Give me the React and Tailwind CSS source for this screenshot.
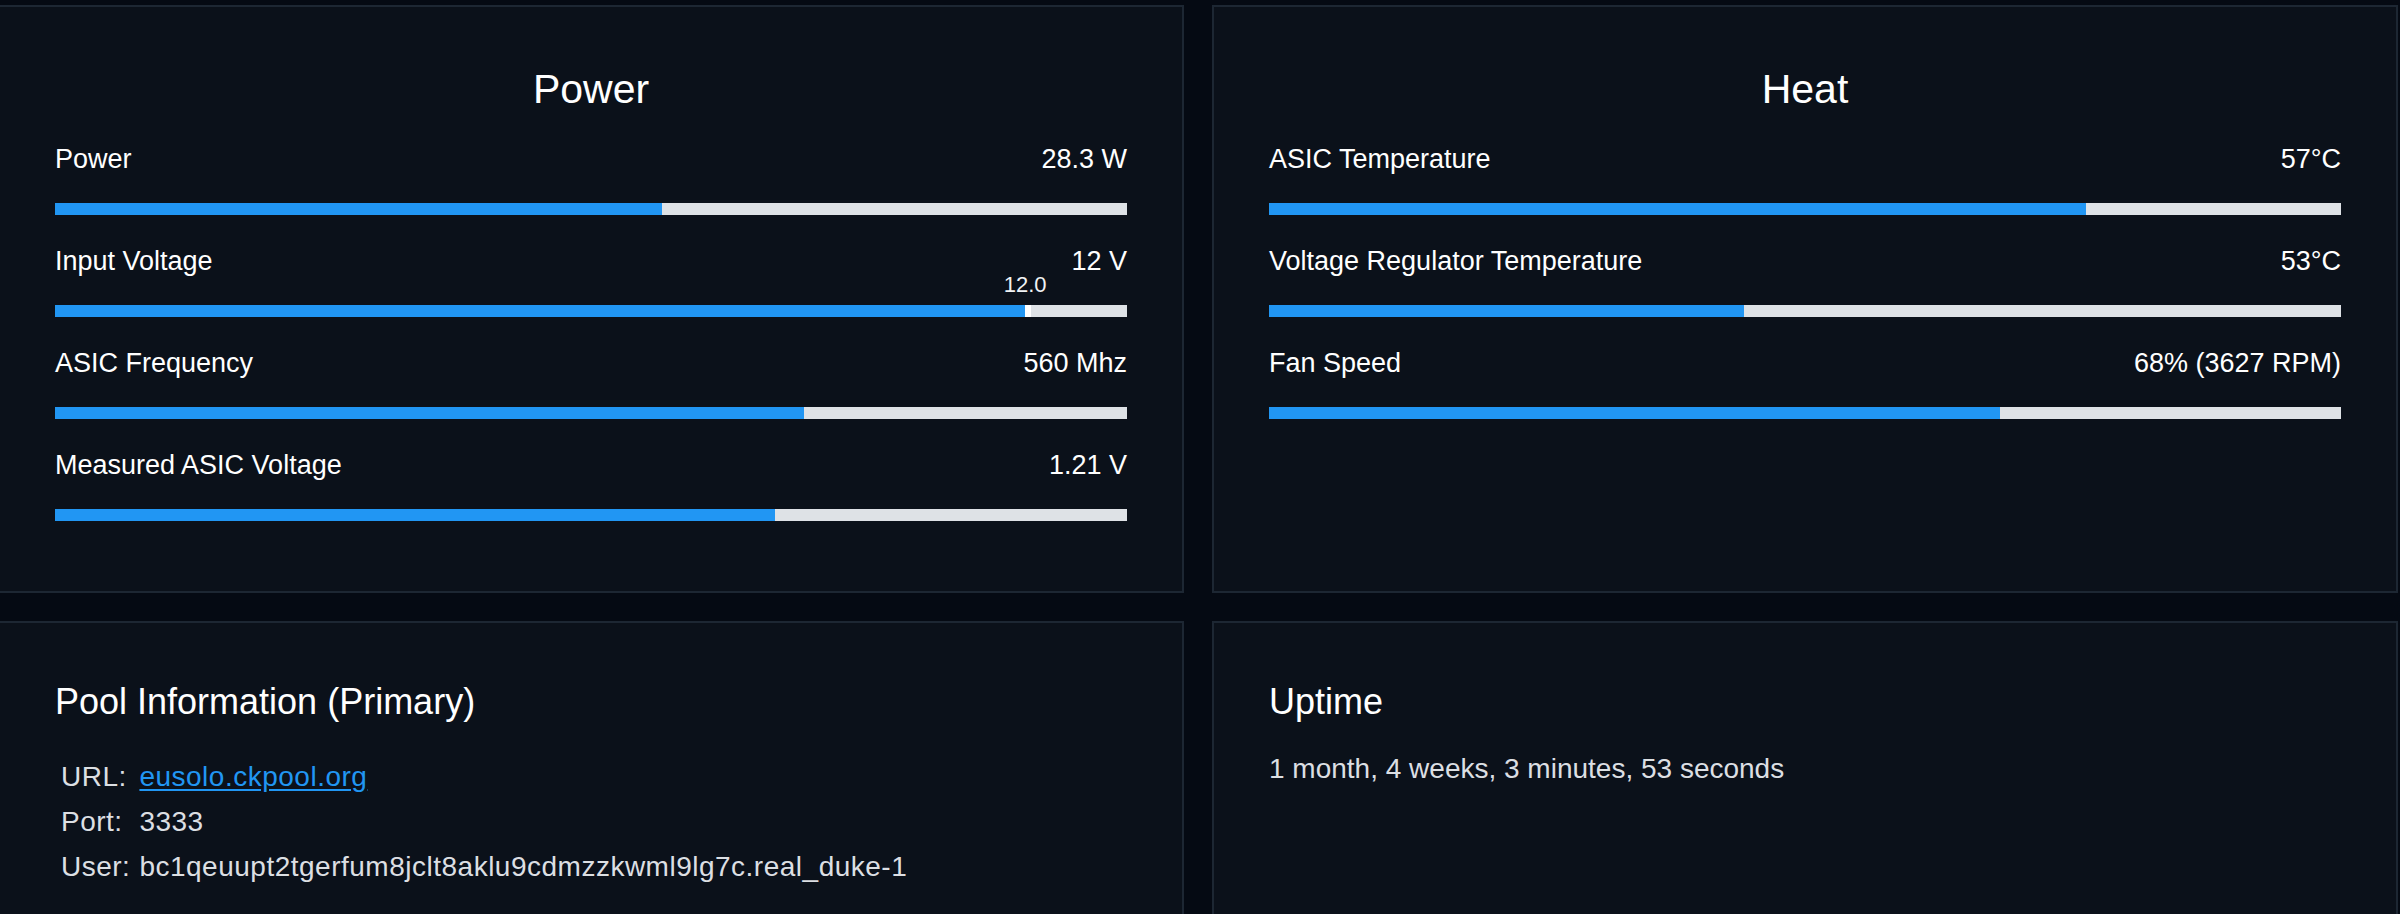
const powerRows = [
  { label: 'Power', value: '28.3 W', pct: 56.6 },
  { label: 'Input Voltage', value: '12 V', pct: 90.5, marker: '12.0' },
  { label: 'ASIC Frequency', value: '560 Mhz', pct: 69.9 },
  { label: 'Measured ASIC Voltage', value: '1.21 V', pct: 67.2 },
];

const heatRows = [
  { label: 'ASIC Temperature', value: '57°C', pct: 76.2 },
  { label: 'Voltage Regulator Temperature', value: '53°C', pct: 44.3 },
  { label: 'Fan Speed', value: '68% (3627 RPM)', pct: 68.2 },
];

const Bar = ({ pct, marker }) => (
  <div className="relative mt-[28px] h-[12px] w-full bg-[#dee2e6]">
    <div className="h-full bg-[#2196f3]" style={{ width: `${pct}%` }} />
    {marker && (
      <>
        <div className="absolute top-0 h-full w-[6px] bg-white" style={{ left: `${pct}%` }} />
        <span
          className="absolute bottom-full mb-[7px] -translate-x-1/2 text-[22px] leading-[26px] text-[#f1f3f5]"
          style={{ left: `${pct}%` }}
        >
          {marker}
        </span>
      </>
    )}
  </div>
);

const MeterCard = ({ title, rows }) => (
  <div className="border-2 border-[#1d2733] bg-[#0b111a] px-[55px] pt-[58px] pb-[70px]">
    <h2 className="mb-[30px] text-center text-[41px] leading-[48px] text-white">{title}</h2>
    <div className="flex flex-col gap-[30px]">
      {rows.map((row) => (
        <div key={row.label}>
          <div className="flex items-center justify-between text-[27px] leading-[32px] text-white">
            <span>{row.label}</span>
            <span>{row.value}</span>
          </div>
          <Bar pct={row.pct} marker={row.marker} />
        </div>
      ))}
    </div>
  </div>
);

const App = () => {
  return (
    <div className="h-[914px] overflow-hidden bg-[#050a13] font-['Liberation_Sans',Arial,sans-serif]">
      <div className="-ml-[2px] w-[2400px] pt-[5px]">
        <div className="grid grid-cols-2 gap-[28px]">
          <MeterCard title="Power" rows={powerRows} />
          <MeterCard title="Heat" rows={heatRows} />
        </div>

        <div className="mt-[28px] grid grid-cols-2 gap-[28px]">
          <div className="min-h-[330px] border-2 border-[#1d2733] bg-[#0b111a] px-[55px] pt-[57px]">
            <h2 className="text-[36px] leading-[43px] text-white">Pool Information (Primary)</h2>
            <div className="mt-[31px] grid grid-cols-[auto_1fr] gap-x-[9px] pl-[6px] text-[28px] leading-[45px] tracking-[0.5px] text-[#dcdfe3]">
              <span>URL:</span>
              <a href="#" className="text-[#2196f3] underline underline-offset-[3px]">eusolo.ckpool.org</a>
              <span>Port:</span>
              <span>3333</span>
              <span>User:</span>
              <span>bc1qeuupt2tgerfum8jclt8aklu9cdmzzkwml9lg7c.real_duke-1</span>
            </div>
          </div>

          <div className="min-h-[330px] border-2 border-[#1d2733] bg-[#0b111a] px-[55px] pt-[57px]">
            <h2 className="text-[36px] leading-[43px] text-white">Uptime</h2>
            <p className="mt-[29px] text-[28px] leading-[34px] text-[#dcdfe3]">
              1 month, 4 weeks, 3 minutes, 53 seconds
            </p>
          </div>
        </div>
      </div>
    </div>
  );
};

export default App;
